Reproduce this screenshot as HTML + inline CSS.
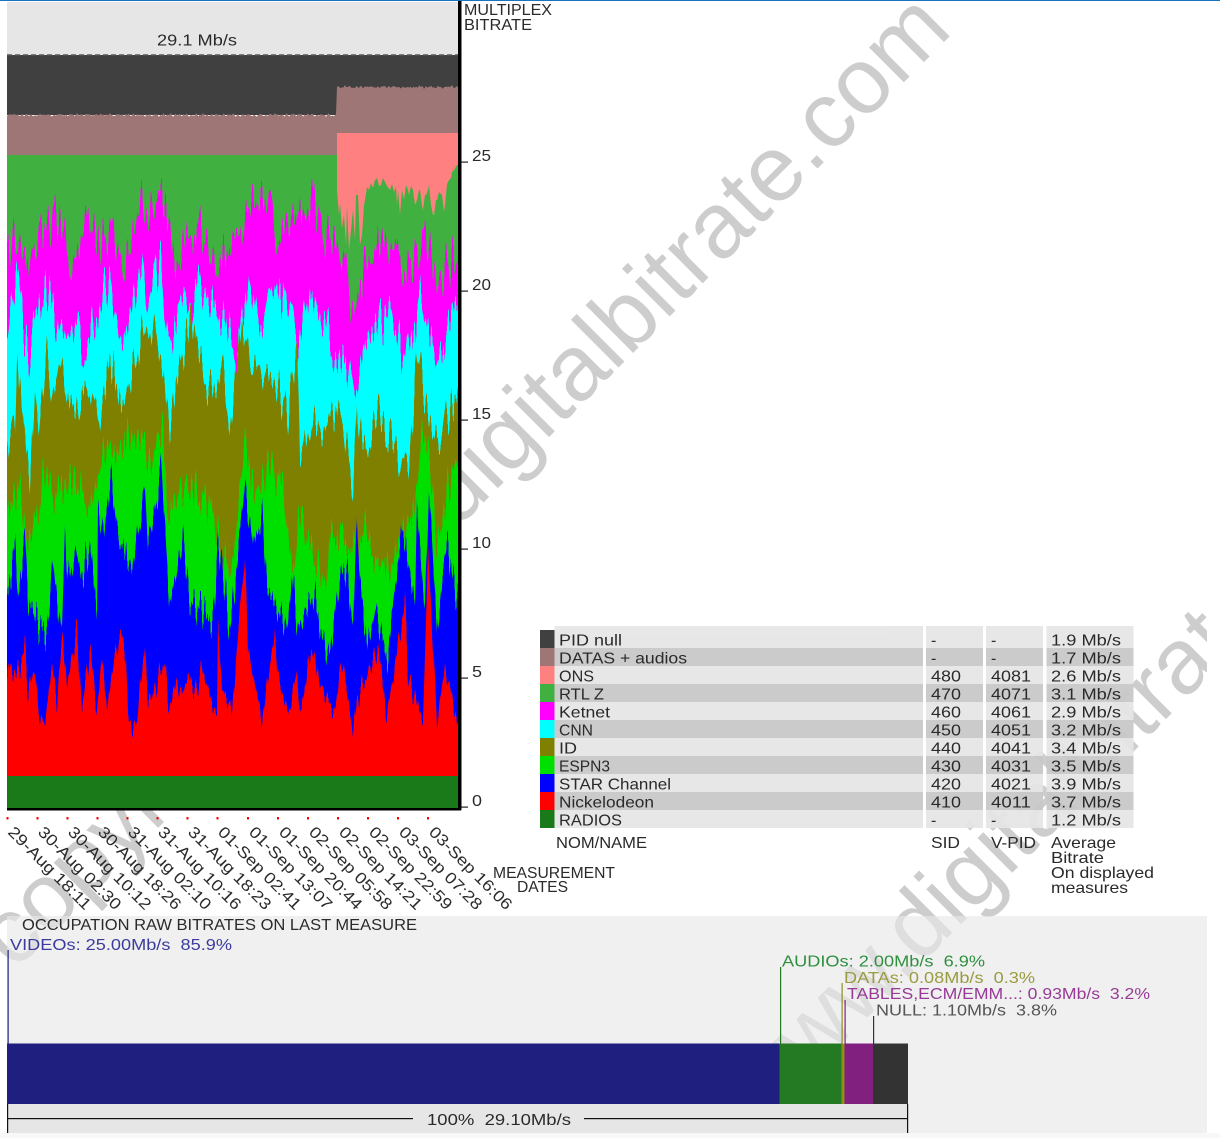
<!DOCTYPE html>
<html>
<head>
<meta charset="utf-8">
<title>Multiplex bitrate</title>
<style>
html,body{margin:0;padding:0;background:#fff;}
svg{display:block;}
text{font-family:"Liberation Sans",sans-serif;font-size:16px;fill:#2a2a2a;white-space:pre;}
.wm{font-size:93px;fill:#cdcdcd;}
</style>
</head>
<body>
<svg width="1220" height="1138" viewBox="0 0 1220 1138" xmlns="http://www.w3.org/2000/svg">
<defs>
<clipPath id="cc"><rect x="7" y="2" width="451" height="807"/></clipPath>
<clipPath id="wc"><rect x="0" y="0" width="1207" height="1138"/></clipPath>
<filter id="s0" filterUnits="userSpaceOnUse" x="0" y="0" width="470" height="830" color-interpolation-filters="sRGB"><feTurbulence type="fractalNoise" baseFrequency="0.43 0.0015" numOctaves="1" seed="11"/><feColorMatrix type="matrix" values="1 0 0 0 0 0 0 0 0 .5 0 0 0 0 0 0 0 0 0 1" result="m"/><feDisplacementMap in="SourceGraphic" in2="m" scale="7" xChannelSelector="G" yChannelSelector="R"/></filter>
<filter id="s1" filterUnits="userSpaceOnUse" x="0" y="0" width="470" height="830" color-interpolation-filters="sRGB"><feTurbulence type="fractalNoise" baseFrequency="0.44 0.0015" numOctaves="1" seed="2"/><feColorMatrix type="matrix" values="1 0 0 0 0 0 0 0 0 .5 0 0 0 0 0 0 0 0 0 1" result="m"/><feDisplacementMap in="SourceGraphic" in2="m" scale="100" xChannelSelector="G" yChannelSelector="R"/></filter>
<filter id="s2" filterUnits="userSpaceOnUse" x="0" y="0" width="470" height="830" color-interpolation-filters="sRGB"><feTurbulence type="fractalNoise" baseFrequency="0.46 0.0015" numOctaves="1" seed="5"/><feColorMatrix type="matrix" values="1 0 0 0 0 0 0 0 0 .5 0 0 0 0 0 0 0 0 0 1" result="m"/><feDisplacementMap in="SourceGraphic" in2="m" scale="100" xChannelSelector="G" yChannelSelector="R"/></filter>
<filter id="s3" filterUnits="userSpaceOnUse" x="0" y="0" width="470" height="830" color-interpolation-filters="sRGB"><feTurbulence type="fractalNoise" baseFrequency="0.42 0.0015" numOctaves="1" seed="8"/><feColorMatrix type="matrix" values="1 0 0 0 0 0 0 0 0 .5 0 0 0 0 0 0 0 0 0 1" result="m"/><feDisplacementMap in="SourceGraphic" in2="m" scale="100" xChannelSelector="G" yChannelSelector="R"/></filter>
<filter id="s4" filterUnits="userSpaceOnUse" x="0" y="0" width="470" height="830" color-interpolation-filters="sRGB"><feTurbulence type="fractalNoise" baseFrequency="0.45 0.0015" numOctaves="1" seed="13"/><feColorMatrix type="matrix" values="1 0 0 0 0 0 0 0 0 .5 0 0 0 0 0 0 0 0 0 1" result="m"/><feDisplacementMap in="SourceGraphic" in2="m" scale="100" xChannelSelector="G" yChannelSelector="R"/></filter>
<filter id="s5" filterUnits="userSpaceOnUse" x="0" y="0" width="470" height="830" color-interpolation-filters="sRGB"><feTurbulence type="fractalNoise" baseFrequency="0.47 0.0015" numOctaves="1" seed="21"/><feColorMatrix type="matrix" values="1 0 0 0 0 0 0 0 0 .5 0 0 0 0 0 0 0 0 0 1" result="m"/><feDisplacementMap in="SourceGraphic" in2="m" scale="90" xChannelSelector="G" yChannelSelector="R"/></filter>
<filter id="s6" filterUnits="userSpaceOnUse" x="0" y="0" width="470" height="830" color-interpolation-filters="sRGB"><feTurbulence type="fractalNoise" baseFrequency="0.41 0.0015" numOctaves="1" seed="34"/><feColorMatrix type="matrix" values="1 0 0 0 0 0 0 0 0 .5 0 0 0 0 0 0 0 0 0 1" result="m"/><feDisplacementMap in="SourceGraphic" in2="m" scale="60" xChannelSelector="G" yChannelSelector="R"/></filter>
</defs>
<rect width="1220" height="1138" fill="#fff"/>
<rect y="0" width="1220" height="1" fill="#1a73c0"/>
<!-- bottom panel -->
<rect x="7" y="916" width="1200" height="217" fill="#f0f0f0"/>
<rect x="0" y="1133" width="1220" height="5" fill="#f8f8f8"/>
<!-- watermark -->
<g clip-path="url(#wc)">
<text class="wm" transform="translate(954 32) rotate(-45)" text-anchor="end">copyright www.digitalbitrate.com</text>
<text class="wm" transform="translate(763 1122) rotate(-45)">www.digitalbitrate.com</text>
</g>
<rect x="7" y="916" width="1200" height="217" fill="#f0f0f0" opacity=".5"/>

<!-- chart -->
<rect x="7" y="2" width="451" height="53" fill="#e6e6e6"/>
<rect x="7" y="55" width="451" height="60" fill="#404040"/>
<g clip-path="url(#cc)">
<polygon filter="url(#s0)" fill="#9e7676" points="7,115 336,115 337,87 458,87 458,810 7,810"/>
<polygon fill="#ff8080" points="337,133 458,133 458,400 337,400"/>
<polygon fill="#40b040" points="7,155 337,155 337,190 339,215 340,203 342,228 344,215 346,245 347,205 349,250 350,240 352,220 353,210 355,240 356,195 358,195 360,245 362,235 364,205 365,200 367,187 369,190 371,183 373,188 375,180 377,178 379,186 381,185 383,178 385,182 387,186 390,190 392,184 394,192 396,187 397,205 398,190 400,215 402,190 404,200 406,185 408,190 409,195 411,186 413,190 415,205 417,200 419,190 420,190 422,206 423,210 425,195 426,195 428,190 429,185 431,205 433,215 434,215 436,200 437,200 439,192 442,195 444,212 445,205 447,184 449,180 451,178 452,172 454,170 457,165 458,165 458,810 7,810"/>
<polygon filter="url(#s1)" fill="#ff00ff" points="7,250 17,233 23,265 38,237 50,225 61,217 73,270 88,200 96,250 113,225 122,270 142,193 147,230 155,197 163,195 176,260 199,225 214,270 233,240 253,205 268,200 279,240 298,210 312,193 325,245 337,245 348,290 354,320 360,280 388,240 402,265 417,255 429,235 436,280 455,258 458,258 458,810 7,810"/>
<polygon filter="url(#s2)" fill="#00ffff" points="7,340 17,273 23,327 31,353 46,283 55,320 67,333 73,320 82,347 96,317 109,277 122,340 142,253 147,310 161,257 168,343 184,307 199,287 214,307 226,323 237,363 249,277 260,320 276,293 291,323 300,343 310,287 321,320 344,360 354,390 367,333 390,307 406,367 419,300 429,327 436,373 448,333 455,303 458,303 458,810 7,810"/>
<polygon filter="url(#s3)" fill="#808000" points="7,450 10,433 15,413 17,347 22,407 27,447 30,477 35,383 40,430 47,358 53,397 62,363 70,417 78,403 88,393 97,430 110,357 123,400 133,370 143,330 150,353 155,317 163,357 170,433 180,373 192,320 197,360 213,397 222,367 232,420 243,330 250,377 263,373 277,380 287,417 297,343 300,460 312,407 320,427 328,433 343,417 353,493 357,400 362,450 378,417 388,433 408,477 417,360 427,400 437,443 455,400 458,400 458,810 7,810"/>
<polygon filter="url(#s4)" fill="#00e000" points="7,513 13,493 20,477 27,547 43,483 50,480 55,503 70,473 77,490 90,503 97,470 107,440 117,457 137,437 142,450 150,463 160,440 163,433 167,510 180,483 200,493 213,520 230,577 245,453 257,500 267,467 283,490 293,577 300,517 327,590 330,533 353,547 367,533 377,560 390,573 400,533 417,500 420,437 430,460 437,543 448,487 457,460 458,460 458,810 7,810"/>
<polygon filter="url(#s5)" fill="#0000ff" points="7,597 15,547 18,600 25,540 28,597 40,627 47,633 53,563 62,633 65,540 68,587 75,550 80,580 90,543 97,610 98,503 102,540 112,470 117,523 132,577 145,478 148,543 155,513 161,468 167,560 170,607 183,540 190,600 213,620 218,540 230,630 245,490 253,550 262,512 267,587 287,630 292,577 298,633 313,593 328,660 342,570 348,577 353,627 357,513 360,580 368,650 375,607 387,660 402,530 405,540 415,610 417,507 425,607 429,487 437,630 443,573 448,547 457,600 458,600 458,810 7,810"/>
<polygon filter="url(#s6)" fill="#ff0000" points="7,687 10,663 17,677 25,647 28,693 35,667 38,710 45,722 52,667 57,700 63,633 67,687 77,630 82,710 90,648 97,710 102,660 107,710 113,663 122,633 126,657 128,723 137,723 145,640 148,707 165,660 168,707 177,683 183,693 188,677 197,693 202,667 217,720 218,627 222,687 232,713 238,633 245,553 248,650 262,722 275,630 278,677 288,715 297,670 300,715 313,643 317,677 335,713 342,657 353,733 357,700 378,648 387,717 405,600 408,677 423,720 428,550 437,723 445,667 457,720 458,720 458,810 7,810"/>
</g>
<rect x="7" y="776" width="451" height="33" fill="#1a7a1a"/>
<line x1="7" y1="55" x2="458" y2="55" stroke="#555" stroke-width="1.5" stroke-dasharray="5 3"/>
<!-- axes -->
<rect x="458" y="1" width="3.5" height="809" fill="#000"/>
<rect x="7" y="808" width="454" height="2.5" fill="#000"/>
<g fill="#222">
<rect x="461" y="161.5" width="7" height="1.2"/>
<rect x="461" y="290.5" width="7" height="1.2"/>
<rect x="461" y="419.5" width="7" height="1.2"/>
<rect x="461" y="548.5" width="7" height="1.2"/>
<rect x="461" y="677.5" width="7" height="1.2"/>
<rect x="461" y="806.5" width="7" height="1.2"/>
</g>
<text x="472" y="161" textLength="19" lengthAdjust="spacingAndGlyphs">25</text>
<text x="472" y="290" textLength="19" lengthAdjust="spacingAndGlyphs">20</text>
<text x="472" y="419" textLength="19" lengthAdjust="spacingAndGlyphs">15</text>
<text x="472" y="548" textLength="19" lengthAdjust="spacingAndGlyphs">10</text>
<text x="472" y="677" textLength="10" lengthAdjust="spacingAndGlyphs">5</text>
<text x="472" y="806" textLength="10" lengthAdjust="spacingAndGlyphs">0</text>
<text x="464" y="15" textLength="88" lengthAdjust="spacingAndGlyphs">MULTIPLEX</text>
<text x="464" y="30" textLength="68" lengthAdjust="spacingAndGlyphs">BITRATE</text>
<text x="157" y="45.5" textLength="80" lengthAdjust="spacingAndGlyphs">29.1 Mb/s</text>

<!-- date ticks -->
<g fill="#f00">
<rect x="6.5" y="817" width="2" height="2.5"/><rect x="36.5" y="817" width="2" height="2.5"/><rect x="66.5" y="817" width="2" height="2.5"/><rect x="96.5" y="817" width="2" height="2.5"/><rect x="126.5" y="817" width="2" height="2.5"/><rect x="156.5" y="817" width="2" height="2.5"/><rect x="186.5" y="817" width="2" height="2.5"/><rect x="216.5" y="817" width="2" height="2.5"/><rect x="247" y="817" width="2" height="2.5"/><rect x="277" y="817" width="2" height="2.5"/><rect x="307" y="817" width="2" height="2.5"/><rect x="337" y="817" width="2" height="2.5"/><rect x="367" y="817" width="2" height="2.5"/><rect x="397" y="817" width="2" height="2.5"/><rect x="427" y="817" width="2" height="2.5"/>
</g>
<g>
<text transform="translate(7 833) rotate(45)" textLength="110" lengthAdjust="spacingAndGlyphs">29-Aug 18:11</text>
<text transform="translate(37 833) rotate(45)" textLength="110" lengthAdjust="spacingAndGlyphs">30-Aug 02:30</text>
<text transform="translate(67 833) rotate(45)" textLength="110" lengthAdjust="spacingAndGlyphs">30-Aug 10:12</text>
<text transform="translate(97 833) rotate(45)" textLength="110" lengthAdjust="spacingAndGlyphs">30-Aug 18:26</text>
<text transform="translate(127 833) rotate(45)" textLength="110" lengthAdjust="spacingAndGlyphs">31-Aug 02:10</text>
<text transform="translate(157 833) rotate(45)" textLength="110" lengthAdjust="spacingAndGlyphs">31-Aug 10:16</text>
<text transform="translate(187 833) rotate(45)" textLength="110" lengthAdjust="spacingAndGlyphs">31-Aug 18:23</text>
<text transform="translate(217 833) rotate(45)" textLength="110" lengthAdjust="spacingAndGlyphs">01-Sep 02:41</text>
<text transform="translate(248 833) rotate(45)" textLength="110" lengthAdjust="spacingAndGlyphs">01-Sep 13:07</text>
<text transform="translate(278 833) rotate(45)" textLength="110" lengthAdjust="spacingAndGlyphs">01-Sep 20:44</text>
<text transform="translate(308 833) rotate(45)" textLength="110" lengthAdjust="spacingAndGlyphs">02-Sep 05:58</text>
<text transform="translate(338 833) rotate(45)" textLength="110" lengthAdjust="spacingAndGlyphs">02-Sep 14:21</text>
<text transform="translate(368 833) rotate(45)" textLength="110" lengthAdjust="spacingAndGlyphs">02-Sep 22:59</text>
<text transform="translate(398 833) rotate(45)" textLength="110" lengthAdjust="spacingAndGlyphs">03-Sep 07:28</text>
<text transform="translate(428 833) rotate(45)" textLength="110" lengthAdjust="spacingAndGlyphs">03-Sep 16:06</text>
</g>
<text x="493" y="878" textLength="122" lengthAdjust="spacingAndGlyphs">MEASUREMENT</text>
<text x="517" y="892" textLength="51" lengthAdjust="spacingAndGlyphs">DATES</text>

<!-- legend table -->
<g opacity=".93">
<rect x="554.5" y="626" width="368.5" height="22" fill="#e6e6e6"/><rect x="926" y="626" width="57" height="22" fill="#e6e6e6"/><rect x="986" y="626" width="57" height="22" fill="#e6e6e6"/><rect x="1046.5" y="626" width="87" height="22" fill="#e6e6e6"/>
<rect x="554.5" y="648" width="368.5" height="18" fill="#c8c8c8"/><rect x="926" y="648" width="57" height="18" fill="#c8c8c8"/><rect x="986" y="648" width="57" height="18" fill="#c8c8c8"/><rect x="1046.5" y="648" width="87" height="18" fill="#c8c8c8"/>
<rect x="554.5" y="666" width="368.5" height="18" fill="#e6e6e6"/><rect x="926" y="666" width="57" height="18" fill="#e6e6e6"/><rect x="986" y="666" width="57" height="18" fill="#e6e6e6"/><rect x="1046.5" y="666" width="87" height="18" fill="#e6e6e6"/>
<rect x="554.5" y="684" width="368.5" height="18" fill="#c8c8c8"/><rect x="926" y="684" width="57" height="18" fill="#c8c8c8"/><rect x="986" y="684" width="57" height="18" fill="#c8c8c8"/><rect x="1046.5" y="684" width="87" height="18" fill="#c8c8c8"/>
<rect x="554.5" y="702" width="368.5" height="18" fill="#e6e6e6"/><rect x="926" y="702" width="57" height="18" fill="#e6e6e6"/><rect x="986" y="702" width="57" height="18" fill="#e6e6e6"/><rect x="1046.5" y="702" width="87" height="18" fill="#e6e6e6"/>
<rect x="554.5" y="720" width="368.5" height="18" fill="#c8c8c8"/><rect x="926" y="720" width="57" height="18" fill="#c8c8c8"/><rect x="986" y="720" width="57" height="18" fill="#c8c8c8"/><rect x="1046.5" y="720" width="87" height="18" fill="#c8c8c8"/>
<rect x="554.5" y="738" width="368.5" height="18" fill="#e6e6e6"/><rect x="926" y="738" width="57" height="18" fill="#e6e6e6"/><rect x="986" y="738" width="57" height="18" fill="#e6e6e6"/><rect x="1046.5" y="738" width="87" height="18" fill="#e6e6e6"/>
<rect x="554.5" y="756" width="368.5" height="18" fill="#c8c8c8"/><rect x="926" y="756" width="57" height="18" fill="#c8c8c8"/><rect x="986" y="756" width="57" height="18" fill="#c8c8c8"/><rect x="1046.5" y="756" width="87" height="18" fill="#c8c8c8"/>
<rect x="554.5" y="774" width="368.5" height="18" fill="#e6e6e6"/><rect x="926" y="774" width="57" height="18" fill="#e6e6e6"/><rect x="986" y="774" width="57" height="18" fill="#e6e6e6"/><rect x="1046.5" y="774" width="87" height="18" fill="#e6e6e6"/>
<rect x="554.5" y="792" width="368.5" height="18" fill="#c8c8c8"/><rect x="926" y="792" width="57" height="18" fill="#c8c8c8"/><rect x="986" y="792" width="57" height="18" fill="#c8c8c8"/><rect x="1046.5" y="792" width="87" height="18" fill="#c8c8c8"/>
<rect x="554.5" y="810" width="368.5" height="18" fill="#e6e6e6"/><rect x="926" y="810" width="57" height="18" fill="#e6e6e6"/><rect x="986" y="810" width="57" height="18" fill="#e6e6e6"/><rect x="1046.5" y="810" width="87" height="18" fill="#e6e6e6"/>
</g>
<rect x="540" y="630" width="14.5" height="18" fill="#404040"/>
<rect x="540" y="648" width="14.5" height="18" fill="#9e7676"/>
<rect x="540" y="666" width="14.5" height="18" fill="#ff8080"/>
<rect x="540" y="684" width="14.5" height="18" fill="#40b040"/>
<rect x="540" y="702" width="14.5" height="18" fill="#ff00ff"/>
<rect x="540" y="720" width="14.5" height="18" fill="#00ffff"/>
<rect x="540" y="738" width="14.5" height="18" fill="#808000"/>
<rect x="540" y="756" width="14.5" height="18" fill="#00e000"/>
<rect x="540" y="774" width="14.5" height="18" fill="#0000ff"/>
<rect x="540" y="792" width="14.5" height="18" fill="#ff0000"/>
<rect x="540" y="810" width="14.5" height="18" fill="#1a7a1a"/>

<g>
<text x="559" y="645.5" textLength="63" lengthAdjust="spacingAndGlyphs">PID null</text>
<text x="559" y="663.5" textLength="128" lengthAdjust="spacingAndGlyphs">DATAS + audios</text>
<text x="559" y="681.5" textLength="35" lengthAdjust="spacingAndGlyphs">ONS</text>
<text x="559" y="699.5" textLength="45" lengthAdjust="spacingAndGlyphs">RTL Z</text>
<text x="559" y="717.5" textLength="51" lengthAdjust="spacingAndGlyphs">Ketnet</text>
<text x="559" y="735.5" textLength="34" lengthAdjust="spacingAndGlyphs">CNN</text>
<text x="559" y="753.5" textLength="18" lengthAdjust="spacingAndGlyphs">ID</text>
<text x="559" y="771.5" textLength="51" lengthAdjust="spacingAndGlyphs">ESPN3</text>
<text x="559" y="789.5" textLength="112" lengthAdjust="spacingAndGlyphs">STAR Channel</text>
<text x="559" y="807.5" textLength="95" lengthAdjust="spacingAndGlyphs">Nickelodeon</text>
<text x="559" y="825.5" textLength="63" lengthAdjust="spacingAndGlyphs">RADIOS</text>

<text x="931" y="645.5">-</text><text x="991" y="645.5">-</text><text x="1051" y="645.5" textLength="70" lengthAdjust="spacingAndGlyphs">1.9 Mb/s</text>
<text x="931" y="663.5">-</text><text x="991" y="663.5">-</text><text x="1051" y="663.5" textLength="70" lengthAdjust="spacingAndGlyphs">1.7 Mb/s</text>
<text x="931" y="681.5" textLength="30" lengthAdjust="spacingAndGlyphs">480</text><text x="991" y="681.5" textLength="40" lengthAdjust="spacingAndGlyphs">4081</text><text x="1051" y="681.5" textLength="70" lengthAdjust="spacingAndGlyphs">2.6 Mb/s</text>
<text x="931" y="699.5" textLength="30" lengthAdjust="spacingAndGlyphs">470</text><text x="991" y="699.5" textLength="40" lengthAdjust="spacingAndGlyphs">4071</text><text x="1051" y="699.5" textLength="70" lengthAdjust="spacingAndGlyphs">3.1 Mb/s</text>
<text x="931" y="717.5" textLength="30" lengthAdjust="spacingAndGlyphs">460</text><text x="991" y="717.5" textLength="40" lengthAdjust="spacingAndGlyphs">4061</text><text x="1051" y="717.5" textLength="70" lengthAdjust="spacingAndGlyphs">2.9 Mb/s</text>
<text x="931" y="735.5" textLength="30" lengthAdjust="spacingAndGlyphs">450</text><text x="991" y="735.5" textLength="40" lengthAdjust="spacingAndGlyphs">4051</text><text x="1051" y="735.5" textLength="70" lengthAdjust="spacingAndGlyphs">3.2 Mb/s</text>
<text x="931" y="753.5" textLength="30" lengthAdjust="spacingAndGlyphs">440</text><text x="991" y="753.5" textLength="40" lengthAdjust="spacingAndGlyphs">4041</text><text x="1051" y="753.5" textLength="70" lengthAdjust="spacingAndGlyphs">3.4 Mb/s</text>
<text x="931" y="771.5" textLength="30" lengthAdjust="spacingAndGlyphs">430</text><text x="991" y="771.5" textLength="40" lengthAdjust="spacingAndGlyphs">4031</text><text x="1051" y="771.5" textLength="70" lengthAdjust="spacingAndGlyphs">3.5 Mb/s</text>
<text x="931" y="789.5" textLength="30" lengthAdjust="spacingAndGlyphs">420</text><text x="991" y="789.5" textLength="40" lengthAdjust="spacingAndGlyphs">4021</text><text x="1051" y="789.5" textLength="70" lengthAdjust="spacingAndGlyphs">3.9 Mb/s</text>
<text x="931" y="807.5" textLength="30" lengthAdjust="spacingAndGlyphs">410</text><text x="991" y="807.5" textLength="40" lengthAdjust="spacingAndGlyphs">4011</text><text x="1051" y="807.5" textLength="70" lengthAdjust="spacingAndGlyphs">3.7 Mb/s</text>
<text x="931" y="825.5">-</text><text x="991" y="825.5">-</text><text x="1051" y="825.5" textLength="70" lengthAdjust="spacingAndGlyphs">1.2 Mb/s</text>

<text x="556" y="848" textLength="91" lengthAdjust="spacingAndGlyphs">NOM/NAME</text>
<text x="931" y="848" textLength="29" lengthAdjust="spacingAndGlyphs">SID</text>
<text x="991" y="848" textLength="45" lengthAdjust="spacingAndGlyphs">V-PID</text>
<text x="1051" y="848" textLength="65" lengthAdjust="spacingAndGlyphs">Average</text>
<text x="1051" y="863" textLength="53" lengthAdjust="spacingAndGlyphs">Bitrate</text>
<text x="1051" y="878" textLength="103" lengthAdjust="spacingAndGlyphs">On displayed</text>
<text x="1051" y="893" textLength="77" lengthAdjust="spacingAndGlyphs">measures</text>
</g>

<!-- bottom occupation -->
<text x="22" y="930" textLength="395" lengthAdjust="spacingAndGlyphs">OCCUPATION RAW BITRATES ON LAST MEASURE</text>
<text x="10" y="950" textLength="222" lengthAdjust="spacingAndGlyphs" style="fill:#3b3b9c">VIDEOs: 25.00Mb/s  85.9%</text>
<text x="782" y="966.5" textLength="203" lengthAdjust="spacingAndGlyphs" style="fill:#2f8f3f">AUDIOs: 2.00Mb/s  6.9%</text>
<text x="844" y="983" textLength="191" lengthAdjust="spacingAndGlyphs" style="fill:#9a9a40">DATAs: 0.08Mb/s  0.3%</text>
<text x="847" y="999" textLength="303" lengthAdjust="spacingAndGlyphs" style="fill:#963a96">TABLES,ECM/EMM...: 0.93Mb/s  3.2%</text>
<text x="876" y="1015.5" textLength="181" lengthAdjust="spacingAndGlyphs" style="fill:#555">NULL: 1.10Mb/s  3.8%</text>

<rect x="7.5" y="950" width="1.2" height="94" fill="#1f1f7f"/>
<rect x="780" y="967" width="1.2" height="77" fill="#237a23"/>
<rect x="841.5" y="983" width="1.2" height="61" fill="#8e8e20"/>
<rect x="844.5" y="1000" width="1.2" height="44" fill="#82207f"/>
<rect x="873" y="1016" width="1.2" height="28" fill="#333"/>

<rect x="7" y="1043.5" width="773" height="60.5" fill="#1f1f7f"/>
<rect x="779.5" y="1043.5" width="62" height="60.5" fill="#237a23"/>
<rect x="841.5" y="1043.5" width="3" height="60.5" fill="#8e8e20"/>
<rect x="844.5" y="1043.5" width="28.5" height="60.5" fill="#82207f"/>
<rect x="873" y="1043.5" width="35" height="60.5" fill="#333"/>

<rect x="7" y="1104" width="901" height="29" fill="#e6e6e6"/>
<rect x="7" y="1104" width="1.2" height="29" fill="#111"/>
<rect x="907" y="1104" width="1.2" height="29" fill="#111"/>
<rect x="7" y="1118" width="406" height="1.2" fill="#111"/>
<rect x="584" y="1118" width="324" height="1.2" fill="#111"/>
<text x="427" y="1125" textLength="144" lengthAdjust="spacingAndGlyphs">100%  29.10Mb/s</text>
</svg>
</body>
</html>
